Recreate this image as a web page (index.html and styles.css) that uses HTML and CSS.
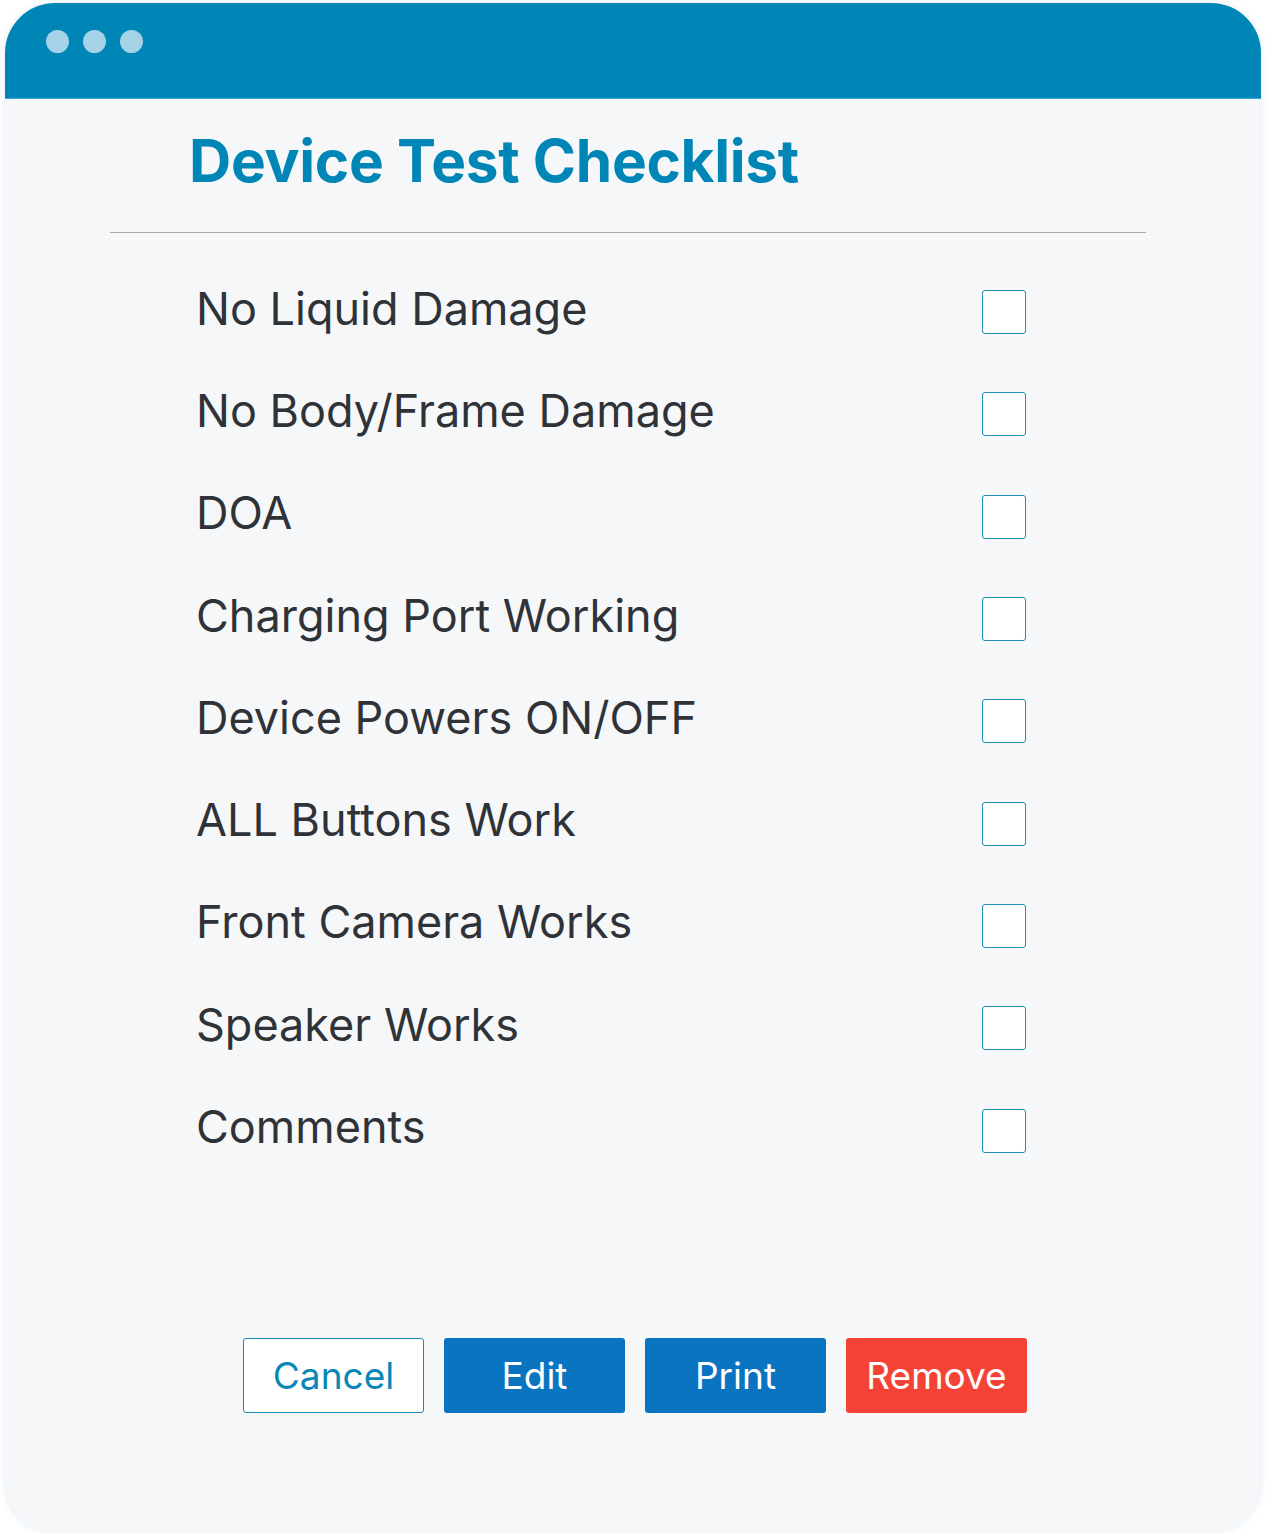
FILE: index.html
```html
<!DOCTYPE html>
<html lang="en">
<head>
    <meta charset="UTF-8">
    <meta name="viewport" content="width=device-width, initial-scale=1.0">
    <title>Device Test Checklist</title>
    <link rel="stylesheet" href="styles.css">
</head>
<body>
    <div class="window">
        <div class="titlebar">
            <span class="dot"></span>
            <span class="dot"></span>
            <span class="dot"></span>
        </div>

        <div class="content">
            <h1>Device Test Checklist</h1>
            <hr class="divider">

            <div class="checklist">
                <label class="row"><span>No Liquid Damage</span> <input type="checkbox"></label>
                <label class="row"><span>No Body/Frame Damage</span> <input type="checkbox"></label>
                <label class="row"><span>DOA</span> <input type="checkbox"></label>
                <label class="row"><span>Charging Port Working</span> <input type="checkbox"></label>
                <label class="row"><span>Device Powers ON/OFF</span> <input type="checkbox"></label>
                <label class="row"><span>ALL Buttons Work</span> <input type="checkbox"></label>
                <label class="row"><span>Front Camera Works</span> <input type="checkbox"></label>
                <label class="row"><span>Speaker Works</span> <input type="checkbox"></label>
                <label class="row"><span>Comments</span> <input type="checkbox"></label>
            </div>

            <div class="actions">
                <button type="button" class="btn btn-outline">Cancel</button>
                <button type="button" class="btn btn-blue">Edit</button>
                <button type="button" class="btn btn-blue">Print</button>
                <button type="button" class="btn btn-red">Remove</button>
            </div>
        </div>
    </div>
</body>
</html>
```

FILE: styles.css
```css
body {
    margin: 0;
    padding: 3px 0 0 5px;
    background-color: #fff;
    font-family: Inter, "Noto Sans", sans-serif;
}

.window {
    width: 1256px;
    height: 1530px;
    background-color: #f6f7f9;
    border-radius: 50px;
    overflow: hidden;
    box-shadow: 0 0 6px rgba(170, 200, 230, 0.35);
    box-sizing: border-box;
}

.titlebar {
    height: 96px;
    background-color: #0086b6;
    display: flex;
    gap: 14px;
    padding: 27px 0 0 41px;
    box-sizing: border-box;
    border-bottom: 1px solid #34a9d6;
}

.dot {
    width: 23px;
    height: 23px;
    border-radius: 50%;
    background-color: #a6d2e8;
}

.content {
    padding: 24px 0 0 105px;
}

h1 {
    margin: 0 0 0 79px;
    font-size: 58.5px;
    line-height: 76px;
    font-weight: 700;
    color: #0086b6;
    letter-spacing: -0.3px;
}

.divider {
    width: 1036px;
    margin: 33px 0 0 0;
    border: none;
    border-top: 1px solid #a9abae;
}

.checklist {
    margin: 28px 0 0 86px;
    width: 830px;
    display: flex;
    flex-direction: column;
}

.row {
    height: 102.3px;
    display: flex;
    align-items: center;
    justify-content: space-between;
    font-size: 45px;
    color: #2f3338;
}

.row span {
    margin-bottom: 8px;
}

.row input {
    appearance: none;
    width: 44px;
    height: 44px;
    margin: 0;
    background-color: #fff;
    border: 1px solid #1f8db5;
    border-radius: 3px;
}

.actions {
    margin: 156px 0 0 133px;
    display: flex;
    gap: 20px;
}

.btn {
    width: 181px;
    height: 75px;
    border-radius: 3px;
    font-family: Inter, "Noto Sans", sans-serif;
    font-size: 37px;
    border: 1px solid transparent;
    color: #fff;
    padding: 0;
}

.btn-outline {
    background-color: #fff;
    border-color: #1a88b2;
    color: #0a88b5;
}

.btn-blue {
    background-color: #0b74c1;
}

.btn-red {
    background-color: #f44336;
}
```
